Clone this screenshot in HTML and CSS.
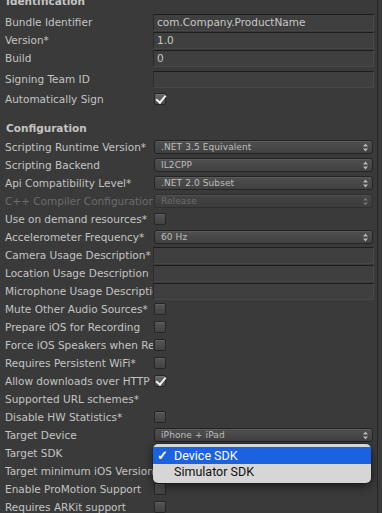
FILE: index.html
```html
<!DOCTYPE html>
<html lang="en">
<head>
    <meta charset="utf-8">
    <title>Player Settings - iOS</title>
    <link rel="stylesheet" href="styles.css">
</head>
<body>
    <div class="inspector">
        <div class="scroll">
            <div class="section-title cut">Identification</div>

            <div class="row">
                <label>Bundle Identifier</label>
                <div class="value"><div class="text-field">com.Company.ProductName</div></div>
            </div>
            <div class="row">
                <label>Version*</label>
                <div class="value"><div class="text-field">1.0</div></div>
            </div>
            <div class="row">
                <label>Build</label>
                <div class="value"><div class="text-field">0</div></div>
            </div>
            <div class="row gap-3">
                <label>Signing Team ID</label>
                <div class="value"><div class="text-field"></div></div>
            </div>
            <div class="row gap-2">
                <label>Automatically Sign</label>
                <div class="value"><div class="checkbox checked"></div></div>
            </div>

            <div class="section-title gap-11">Configuration</div>

            <div class="row gap-1">
                <label>Scripting Runtime Version*</label>
                <div class="value"><div class="popup"><span>.NET 3.5 Equivalent</span><i class="arrows"></i></div></div>
            </div>
            <div class="row">
                <label>Scripting Backend</label>
                <div class="value"><div class="popup"><span>IL2CPP</span><i class="arrows"></i></div></div>
            </div>
            <div class="row">
                <label>Api Compatibility Level*</label>
                <div class="value"><div class="popup"><span>.NET 2.0 Subset</span><i class="arrows"></i></div></div>
            </div>
            <div class="row disabled">
                <label>C++ Compiler Configuration</label>
                <div class="value"><div class="popup"><span>Release</span><i class="arrows"></i></div></div>
            </div>
            <div class="row">
                <label>Use on demand resources*</label>
                <div class="value"><div class="checkbox"></div></div>
            </div>
            <div class="row">
                <label>Accelerometer Frequency*</label>
                <div class="value"><div class="popup"><span>60 Hz</span><i class="arrows"></i></div></div>
            </div>
            <div class="row">
                <label>Camera Usage Description*</label>
                <div class="value"><div class="text-field"></div></div>
            </div>
            <div class="row">
                <label>Location Usage Description</label>
                <div class="value"><div class="text-field"></div></div>
            </div>
            <div class="row">
                <label>Microphone Usage Description</label>
                <div class="value"><div class="text-field"></div></div>
            </div>
            <div class="row">
                <label>Mute Other Audio Sources*</label>
                <div class="value"><div class="checkbox"></div></div>
            </div>
            <div class="row">
                <label>Prepare iOS for Recording</label>
                <div class="value"><div class="checkbox"></div></div>
            </div>
            <div class="row">
                <label>Force iOS Speakers when Recording</label>
                <div class="value"><div class="checkbox"></div></div>
            </div>
            <div class="row">
                <label>Requires Persistent WiFi*</label>
                <div class="value"><div class="checkbox"></div></div>
            </div>
            <div class="row">
                <label>Allow downloads over HTTP (nonsecure)*</label>
                <div class="value"><div class="checkbox checked"></div></div>
            </div>
            <div class="row">
                <label>Supported URL schemes*</label>
                <div class="value"></div>
            </div>
            <div class="row">
                <label>Disable HW Statistics*</label>
                <div class="value"><div class="checkbox"></div></div>
            </div>
            <div class="row">
                <label>Target Device</label>
                <div class="value"><div class="popup"><span>iPhone + iPad</span><i class="arrows"></i></div></div>
            </div>
            <div class="row">
                <label>Target SDK</label>
                <div class="value anchor">
                    <ul class="menu">
                        <li class="menu-item selected"><span class="tick">✓</span>Device SDK</li>
                        <li class="menu-item"><span class="tick"></span>Simulator SDK</li>
                    </ul>
                </div>
            </div>
            <div class="row">
                <label>Target minimum iOS Version</label>
                <div class="value"></div>
            </div>
            <div class="row">
                <label>Enable ProMotion Support</label>
                <div class="value"><div class="checkbox"></div></div>
            </div>
            <div class="row">
                <label>Requires ARKit support</label>
                <div class="value"><div class="checkbox"></div></div>
            </div>
        </div>
    </div>
</body>
</html>
```

FILE: styles.css
```css
* {
    margin: 0;
    padding: 0;
    box-sizing: border-box;
}

body {
    background: #3a3a3a;
    font-family: "DejaVu Sans", sans-serif;
    font-size: 10.5px;
    color: #c4c4c4;
    overflow: hidden;
}

.inspector {
    width: 378px;
    height: 513px;
    padding-left: 5px;
    border-right: 1px solid #252525;
    overflow: hidden;
}

/* scrolled a little, header is cut at the top */
.scroll {
    margin-top: -8px;
}

.section-title {
    height: 18px;
    line-height: 18px;
    font-weight: bold;
    padding-left: 1px;
}

.section-title.cut {
    margin-bottom: 3px;
}

.row {
    display: flex;
    align-items: center;
    height: 18px;
}

.row label {
    width: 148px;
    flex: none;
    overflow: hidden;
    white-space: nowrap;
}

.gap-1 { margin-top: 1px; }
.gap-2 { margin-top: 2px; }
.gap-3 { margin-top: 3px; }
.gap-11 { margin-top: 11px; }

.value {
    flex: 1;
    align-self: stretch;
    display: flex;
    flex-direction: column;
    justify-content: center;
    margin-right: 3px;
}

.anchor {
    position: relative;
}

.text-field {
    height: 17px;
    line-height: 15px;
    padding: 0 3px;
    background: #3f3f3f;
    border: 1px solid #2b2b2b;
    border-top-color: #1d1d1d;
    border-bottom-color: #474747;
    border-right-color: #4a4a4a;
    border-radius: 1px;
    color: #c8c8c8;
    white-space: nowrap;
    overflow: hidden;
}

.popup {
    height: 14px;
    margin: 0 1px;
    padding: 0 4px 0 6px;
    display: flex;
    align-items: center;
    justify-content: space-between;
    background: linear-gradient(#4f4f4f, #414141);
    border: 1px solid #242424;
    border-radius: 3px;
    box-shadow: inset 0 1px 0 rgba(255, 255, 255, 0.07);
    font-size: 9px;
    color: #bdbdbd;
    letter-spacing: 0.1px;
}

.arrows {
    width: 5px;
    height: 9px;
    background: url("data:image/svg+xml,%3Csvg xmlns='http://www.w3.org/2000/svg' width='5' height='9'%3E%3Cpath d='M0 3.5L2.5 0.5L5 3.5z M0 5.5L2.5 8.5L5 5.5z' fill='%23b8b8b8'/%3E%3C/svg%3E") no-repeat;
}

.checkbox {
    width: 12px;
    height: 12px;
    margin-left: 1px;
    position: relative;
    background: linear-gradient(#555555, #424242);
    border: 1px solid #262626;
    border-radius: 2px;
    box-shadow: inset 0 1px 0 rgba(255, 255, 255, 0.08);
}

.checkbox.checked {
    background: linear-gradient(#666666, #4c4c4c);
}

.checkbox.checked:after {
    content: "";
    position: absolute;
    left: 3px;
    top: -1px;
    width: 3.5px;
    height: 8px;
    border: solid #f4f4f4;
    border-width: 0 2px 2px 0;
    transform: rotate(40deg);
}

.disabled label,
.disabled .popup {
    color: #6c6c6c;
}

.disabled .popup {
    background: linear-gradient(#444444, #3c3c3c);
    border-color: #2e2e2e;
}

.disabled .arrows {
    opacity: 0.4;
}

.menu {
    position: absolute;
    top: 0;
    left: 0;
    right: 3px;
    z-index: 2;
    list-style: none;
    padding: 3px 0;
    background: #d6d6d6;
    border-radius: 5px;
    box-shadow: 0 3px 10px rgba(0, 0, 0, 0.55), 0 0 0 0.5px rgba(0, 0, 0, 0.3);
    font-family: Roboto, "Liberation Sans", sans-serif;
    font-size: 12.5px;
    color: #111;
}

.menu-item {
    height: 16.5px;
    display: flex;
    align-items: center;
    padding-left: 4px;
}

.menu-item.selected {
    background: #1a62df;
    color: #fff;
}

.tick {
    width: 17px;
    font-weight: bold;
}
```
